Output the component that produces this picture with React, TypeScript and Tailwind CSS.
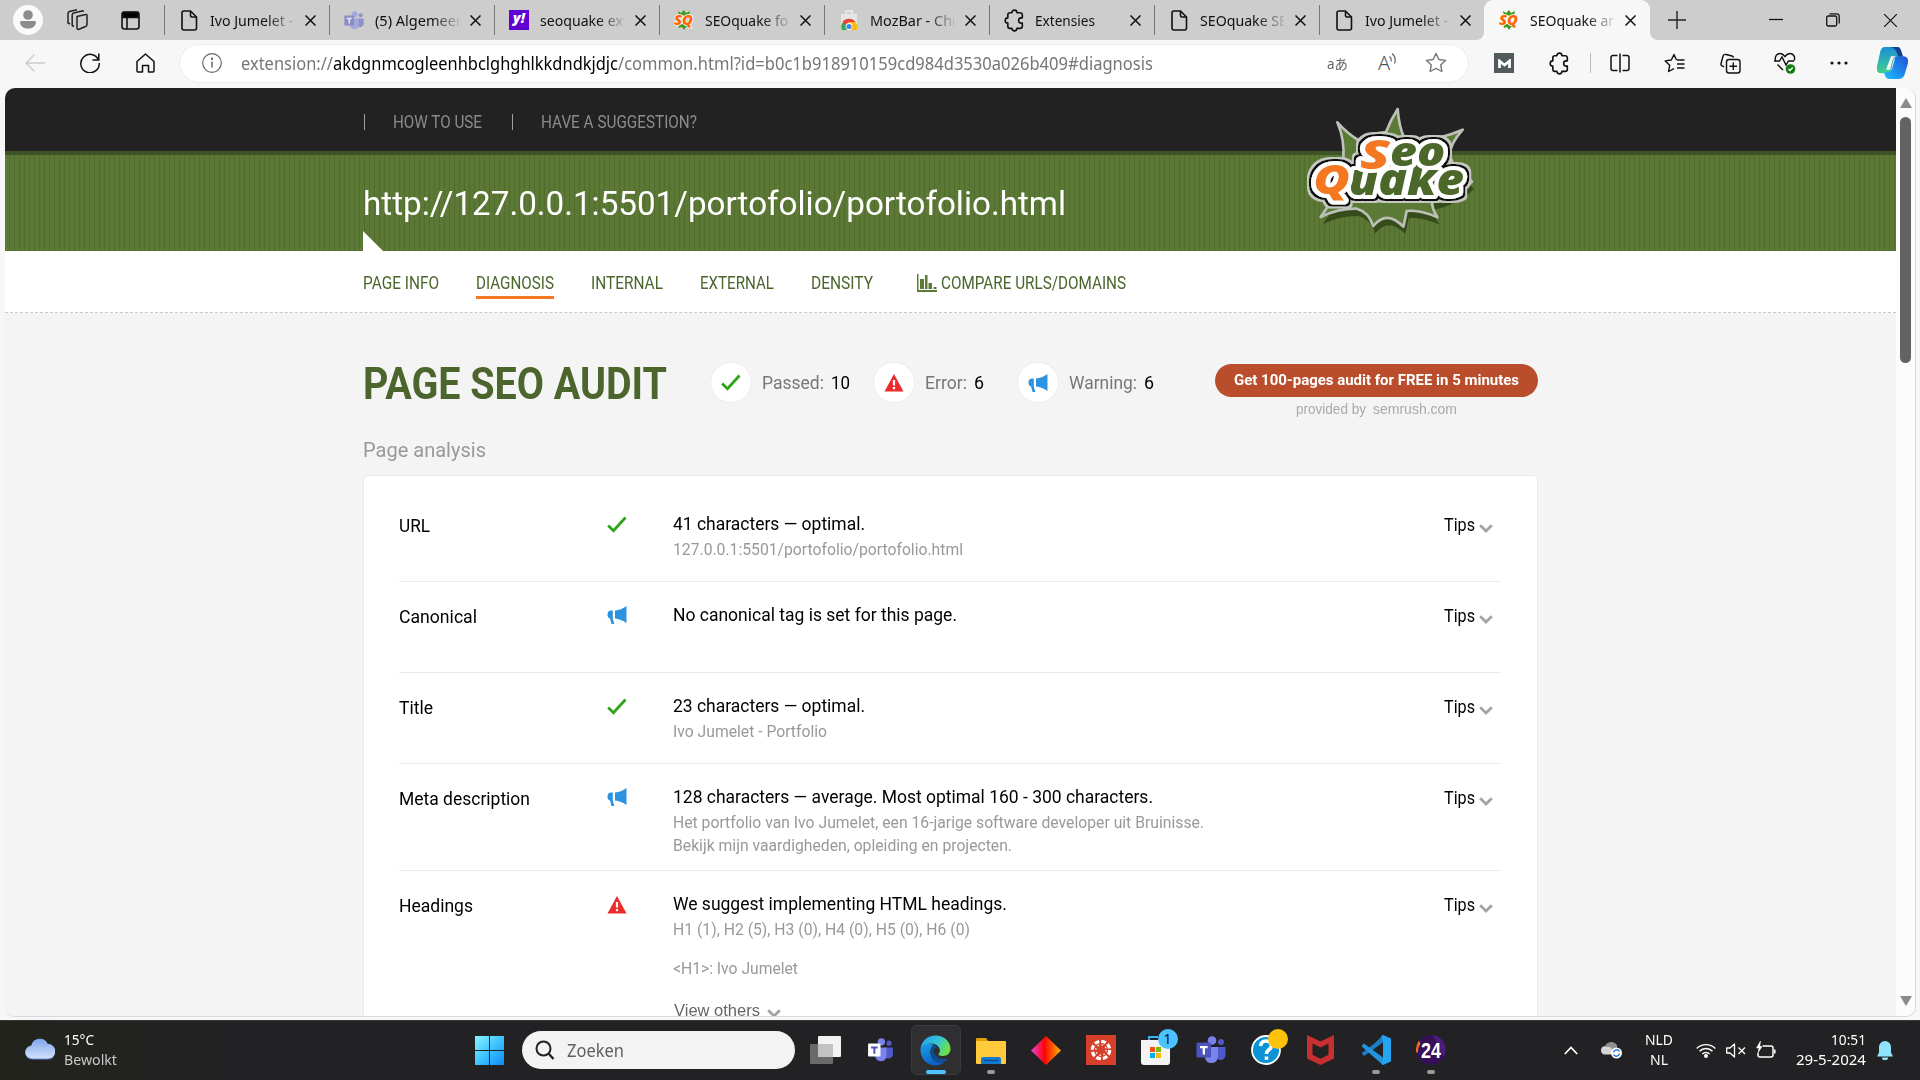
import React, { useLayoutEffect, useRef } from "react";

/* Text squeezed or stretched horizontally to the width its class gives it. */
function Fit({ className = "", children }: { className?: string; children: React.ReactNode }) {
  const outer = useRef<HTMLSpanElement>(null);
  const inner = useRef<HTMLSpanElement>(null);
  useLayoutEffect(() => {
    const o = outer.current;
    const i = inner.current;
    if (!o || !i) return;
    i.style.transform = "none";
    const natural = i.getBoundingClientRect().width;
    i.style.transform = `scaleX(${o.clientWidth / natural})`;
  });
  return (
    <span ref={outer} className={"block shrink-0 whitespace-nowrap " + className}>
      <span ref={inner} className="inline-block origin-left">{children}</span>
    </span>
  );
}

const segoe = "font-['Noto_Sans','Open_Sans',sans-serif]";

/* ---------- favicons ---------- */
const DocIcon = () => (
  <svg className="h-[21px] w-[17px]" viewBox="0 0 17 21" fill="none" stroke="#111" strokeWidth="1.6" strokeLinejoin="round">
    <path d="M3 1h6.5L15.500 7v11a2 2 0 0 1-2 2H3a2 2 0 0 1-2-2V3a2 2 0 0 1 2-2z" />
    <path d="M9.500 1v4.500a1.500 1.500 0 0 0 1.500 1.500h4.500" />
  </svg>
);
const SqIcon = () => (
  <svg className="h-5 w-5" viewBox="0 0 20 20">
    <path d="M4 1l3 2 3-3 2 3 4-2-1 5H5zM4 14l1 4 3-1 2 3 2-3 4 1v-4z" fill="#3f9b1c" />
    <text x="0" y="15" fontFamily="Open Sans" fontWeight="800" fontStyle="italic" fontSize="14" fill="#f60" stroke="#fff" strokeWidth="1.5" paintOrder="stroke" textLength="19" lengthAdjust="spacingAndGlyphs">SQ</text>
  </svg>
);
const TeamsIcon = ({ className = "", tile = "#4b53bc", letter = "#fff" }: { className?: string; tile?: string; letter?: string }) => (
  <svg className={className} viewBox="0 0 30 28">
    <circle cx="25" cy="6" r="3" fill="#5059c9" />
    <circle cx="16" cy="4.500" r="4.300" fill="#7b83eb" />
    <path d="M20 11h9.500v8a5 5 0 0 1-8 4z" fill="#5059c9" />
    <path d="M9 11h13v10a6.600 6.600 0 0 1-13 1z" fill="#7b83eb" />
    <rect x="0.500" y="6.500" width="14.500" height="15" rx="1" fill={tile} />
    <path d="M4 10h7.600v2.200H9V18.500H6.700V12.200H4z" fill={letter} />
  </svg>
);
const YahooIcon = () => (
  <span className="flex h-5 w-5 items-center justify-center bg-[#5f01d1] pb-1 font-['Open_Sans',sans-serif] text-[14px] leading-none font-extrabold text-white italic">y!</span>
);
const StoreFav = () => (
  <svg className="h-5 w-5" viewBox="0 0 20 20">
    <path d="M2 4h16v14a2 2 0 0 1-2 2H4a2 2 0 0 1-2-2z" fill="#e3e5e8" />
    <path d="M7 4V1h6v3" fill="none" stroke="#eee" strokeWidth="1.500" />
    <path d="M3 20a7.500 7.500 0 0 1 1-8l4 5v3z" fill="#34a853" />
    <path d="M3.500 12a8 8 0 0 1 13 0h-6.500l-3 4z" fill="#ea4335" />
    <path d="M10 12h6.500a8 8 0 0 1 1 8h-6z" fill="#fbbc05" />
    <circle cx="10" cy="16.500" r="3.400" fill="#fff" />
    <circle cx="10" cy="16.500" r="2.600" fill="#4285f4" />
  </svg>
);
const Puzzle = ({ className = "" }: { className?: string }) => (
  <svg className={className} viewBox="0 0 20 20" fill="none" stroke="#111" strokeWidth="1.4" strokeLinejoin="round">
    <path d="M6 3.200h1.700a2.200 2.200 0 0 1 4.400 0h2.900a1.800 1.800 0 0 1 1.800 1.800v2.700h-.9a2.300 2.300 0 0 0 0 4.600h.9v2.700a1.800 1.800 0 0 1-1.800 1.800h-2.900a2.200 2.200 0 0 1-4.400 0H6a1.800 1.800 0 0 1-1.800-1.800v-2.700a2.300 2.300 0 0 1 0-4.600V5A1.800 1.800 0 0 1 6 3.200z" />
  </svg>
);
const Cross = () => (
  <svg className="h-[11px] w-[11px]" viewBox="0 0 11 11" stroke="#111" strokeWidth="1.500"><path d="M.5.5l10 10M10.500.5l-10 10" /></svg>
);

const tabs: { icon: React.ReactNode; title: string; width: string }[] = [
  { icon: <DocIcon />, title: "Ivo Jumelet -", width: "w-[83px]" },
  { icon: <TeamsIcon className="h-[19px] w-5 opacity-50" />, title: "(5) Algemeen", width: "w-[90px]" },
  { icon: <YahooIcon />, title: "seoquake ext", width: "w-[88px]" },
  { icon: <SqIcon />, title: "SEOquake for", width: "w-[89px]" },
  { icon: <StoreFav />, title: "MozBar - Chr", width: "w-[88px]" },
  { icon: <Puzzle className="h-[23px] w-[23px] shrink-0" />, title: "Extensies", width: "w-[60px]" },
  { icon: <DocIcon />, title: "SEOquake SE", width: "w-[87px]" },
  { icon: <DocIcon />, title: "Ivo Jumelet -", width: "w-[83px]" },
];

function Tab({ icon, title, width }: { icon: React.ReactNode; title: string; width: string }) {
  return (
    <>
      <span className="ml-[14px] flex w-5 shrink-0 justify-center">{icon}</span>
      <span className={"ml-[11px] w-[84px] shrink-0 overflow-hidden text-[15px] leading-5 text-[#111] " + (title === "Extensies" ? "" : "[mask-image:linear-gradient(to_right,black_68%,transparent_104%)]")}>
        <Fit className={width}>{title}</Fit>
      </span>
      <span className="ml-[11px]"><Cross /></span>
    </>
  );
}

function TabStrip() {
  return (
    <div className="flex h-10 shrink-0 items-center bg-[#cdcdcd]">
      <span className="ml-[13px] flex h-[30px] w-[30px] items-center justify-center rounded-full bg-[#fafafa]">
        <svg className="h-[20px] w-[16px]" viewBox="0 0 16 20" fill="#8c8c8c"><circle cx="8" cy="5" r="4.800" /><path d="M1.500 11h13a1.400 1.400 0 0 1 1.400 1.500C15.500 16.500 12 18.500 8 18.500S.5 16.500.1 12.500A1.400 1.400 0 0 1 1.500 11z" /></svg>
      </span>
      <svg className="ml-[23px] h-[22px] w-[22px]" viewBox="0 0 22 22" fill="none" stroke="#222" strokeWidth="1.500" strokeLinejoin="round">
        <path d="M11 7.500l8.500-2A1.200 1.200 0 0 1 21 7v8.500a2 2 0 0 1-1.500 2L12.500 20.500A1.200 1.200 0 0 1 11 19.300z" />
        <path d="M8 17.500l-1.800-1V6a2 2 0 0 1 1.500-2L17 1.800V3M4 15l-2-1V4.500A2 2 0 0 1 3.500 2.600L11 .8" />
      </svg>
      <svg className="ml-[33px] h-[19px] w-[19px]" viewBox="0 0 19 19" fill="none" stroke="#111" strokeWidth="1.600">
        <rect x="1" y="1" width="17" height="17" rx="2.500" /><path d="M2 1.500h15v5H2z" fill="#000" /><path d="M6 6v12" />
      </svg>
      <div className="ml-[24px] flex">
        {tabs.map((t, i) => (
          <div key={i} className="flex h-10 w-[165px] items-center">
            <span className="h-[30px] w-px bg-[#777]" />
            <Tab {...t} />
          </div>
        ))}
      </div>
      <div className="relative flex h-10 w-[166px] items-center rounded-t-[9px] bg-[#f7f7f7]">
        <svg className="absolute bottom-0 -left-2 h-2 w-2" viewBox="0 0 8 8"><path d="M8 0v8H0a8 8 0 0 0 8-8z" fill="#f7f7f7" /></svg>
        <svg className="absolute -right-2 bottom-0 h-2 w-2" viewBox="0 0 8 8"><path d="M0 0v8h8a8 8 0 0 1-8-8z" fill="#f7f7f7" /></svg>
        <span className="w-px" />
        <Tab icon={<SqIcon />} title="SEOquake an" width="w-[87px]" />
      </div>
      <svg className="ml-[18px] h-[18px] w-[18px]" viewBox="0 0 18 18" stroke="#222" strokeWidth="1.400"><path d="M9 0v18M0 9h18" /></svg>
      <svg className="ml-[83px] h-[14px] w-[14px]" viewBox="0 0 14 14" stroke="#111" strokeWidth="1.300"><path d="M0 6.500h14" /></svg>
      <svg className="ml-[43px] h-[14px] w-[14px]" viewBox="0 0 14 14" fill="none" stroke="#111" strokeWidth="1.300"><rect x=".7" y="3" width="10" height="10" rx="1.500" /><path d="M3.500.8H11a2.200 2.200 0 0 1 2.200 2.200v7.500" /></svg>
      <svg className="ml-[44px] h-[13px] w-[13px]" viewBox="0 0 13 13" stroke="#111" strokeWidth="1.200"><path d="M0 0l13 13M13 0L0 13" /></svg>
    </div>
  );
}

const Star = ({ className = "", stroke = "#777" }: { className?: string; stroke?: string }) => (
  <svg className={className} viewBox="0 0 22 22" fill="none" stroke={stroke} strokeWidth="1.400" strokeLinejoin="round"><path d="M11 1.500l2.900 6 6.600.9-4.800 4.600 1.200 6.500-5.900-3.100-5.900 3.100 1.200-6.500L1.500 8.400l6.600-.9z" /></svg>
);

function Toolbar() {
  return (
    <div className="flex h-12 shrink-0 items-center bg-[#f7f7f7] pb-[2px]">
      <svg className="ml-[25px] h-[18px] w-5" viewBox="0 0 20 18" fill="none" stroke="#ccc" strokeWidth="1.400"><path d="M20 9H1M9.500.5L1 9l8.500 8.500" /></svg>
      <svg className="ml-[35px] h-[20px] w-[20px]" viewBox="0 0 20 20" fill="none" stroke="#111" strokeWidth="1.500"><path d="M18.500 7A9.200 9.200 0 1 0 19.200 10M18.800 .5V7H12.500" /></svg>
      <svg className="ml-[36px] h-[20px] w-[19px]" viewBox="0 0 19 20" fill="none" stroke="#111" strokeWidth="1.500" strokeLinejoin="round"><path d="M1 8.500L9.500 1 18 8.500V18a1 1 0 0 1-1 1h-4.500v-6.500h-6V19H2a1 1 0 0 1-1-1z" /></svg>
      <div className="ml-[25px] flex h-[37px] w-[1288px] shrink-0 items-center rounded-full bg-white shadow-[0_0_2px_#0002]">
        <svg className="ml-[22px] h-5 w-5" viewBox="0 0 20 20" fill="none" stroke="#666" strokeWidth="1.200"><circle cx="10" cy="10" r="9.300" /><path d="M10 8.500v6" strokeWidth="1.500" /><circle cx="10" cy="5.800" r=".6" fill="#666" /></svg>
        <div className="ml-[19px] flex text-[17.5px] leading-6 text-[#767676]">
          <Fit className="w-[92px]">extension://</Fit>
          <Fit className="w-[285px] text-black">akdgnmcogleenhbclghghlkkdndkjdjc</Fit>
          <Fit className="w-[535px]">/common.html?id=b0c1b918910159cd984d3530a026b409#diagnosis</Fit>
        </div>
        <Fit className="ml-[174px] w-[21px] font-['Noto_Sans','Noto_Sans_CJK_JP',sans-serif] text-[14px] text-[#666]">aあ</Fit>
        <div className="ml-[30px] flex">
          <span className="text-[20px] leading-5 font-light text-[#555]">A</span>
          <svg className="-ml-[1px] h-3 w-2" viewBox="0 0 8 12" fill="none" stroke="#666" strokeWidth="1.200"><path d="M.5 3.500a5 5 0 0 1 1.500 5M3 .5a9 9 0 0 1 2.500 10" /></svg>
        </div>
        <Star className="ml-[28px] h-[22px] w-[22px]" />
      </div>
      <span className="ml-[26px] flex h-5 w-5 shrink-0 items-center justify-center bg-[#515a5c]">
        <svg className="h-[9px] w-[13px]" viewBox="0 0 13 9" fill="none" stroke="#fff" strokeWidth="2.800"><path d="M1.500 9V2l5 4 5-4v7" /></svg>
      </span>
      <Puzzle className="ml-[34px] h-[23px] w-[23px]" />
      <span className="ml-[19px] h-5 w-px bg-[#bbb]" />
      <svg className="ml-[19px] h-5 w-5" viewBox="0 0 20 20" fill="none" stroke="#111" strokeWidth="1.500"><path d="M10 .5v19M7.500 2.500H3a2 2 0 0 0-2 2v11a2 2 0 0 0 2 2h4.500M12.500 2.500H17a2 2 0 0 1 2 2v11a2 2 0 0 1-2 2h-4.500" /></svg>
      <svg className="ml-[34px] h-5 w-[21px]" viewBox="0 0 21 20" fill="none" stroke="#111" strokeWidth="1.400" strokeLinejoin="round"><path d="M12.500 7L10 1.500 7.300 7 1.200 7.900l4.500 4.300L4.600 18.500 10 15.600M13 7h7.500M13 11h7.500M13 15h7.500" /></svg>
      <svg className="ml-[35px] h-[21px] w-[21px]" viewBox="0 0 21 21" fill="none" stroke="#111" strokeWidth="1.400"><rect x="6.500" y="6.500" width="13.500" height="13.500" rx="2.500" /><path d="M13.300 9.500v7.500M9.500 13.300h7.500M4 14l-1.500-.8a2.500 2.500 0 0 1-1.400-3L3 3.300A2.500 2.500 0 0 1 6 1.500l6 1.500a2.500 2.500 0 0 1 1.600 1.500" /></svg>
      <svg className="ml-[33px] h-[22px] w-[22px]" viewBox="0 0 22 22" fill="none" stroke="#111" strokeWidth="1.400"><path d="M1.500 9C.5 4 3 1.500 6 1.500c2 0 3.500 1 5 3 1.500-2 3-3 5-3 3 0 5.500 3 4.300 7M0 9h5.500l2.500-4 4 8 2.500-4H20M3.500 12.500L9 18" /><circle cx="16.500" cy="17" r="4.800" fill="#107c10" stroke="none" /><path d="M14.500 17l1.500 1.500 2.700-3" stroke="#fff" /></svg>
      <svg className="ml-[34px] h-4 w-[18px]" viewBox="0 0 18 16" fill="#111"><circle cx="2" cy="8" r="1.600" /><circle cx="9" cy="8" r="1.600" /><circle cx="16" cy="8" r="1.600" /></svg>
      <svg className="ml-[29px] h-[32px] w-[31px]" viewBox="0 0 31 28" preserveAspectRatio="none">
        <defs>
          <linearGradient id="cpA" x1="0" y1="0" x2="0" y2="1"><stop offset="0" stopColor="#1b8fd8" /><stop offset="1" stopColor="#3fd08a" /></linearGradient>
          <linearGradient id="cpB" x1="1" y1="0" x2="0" y2="1"><stop offset="0" stopColor="#2350d8" /><stop offset="1" stopColor="#18c0ff" /></linearGradient>
        </defs>
        <path d="M8 0h12q3 0 4 3l2 6h-5q-4 0-5 4l-2 8q-1 2-3 2H4q-5 0-4-6L3 5Q4 0 8 0z" fill="url(#cpA)" />
        <path d="M26 8q6 0 5 6l-3 9q-1.500 5-6 5H12q-3 0-4-3l-1-3h4q3 0 4-3l3-9q1-2 3-2z" fill="url(#cpB)" />
        <path d="M14 8h5q-3 1-4 5l-2 7H9z" fill="#f7f7f7" />
        <path d="M14 0h6q3 0 4 3l2 5h-5q-2-7-7-8z" fill="#143f8f" />
      </svg>
    </div>
  );
}

/* ---------- page ---------- */
const burst = "M232 97Q262 130 294 150Q330 130 378 126Q392 90 413 57Q417 110 432 142Q452 155 480 152Q545 146 608 119Q572 160 570 190Q572 225 600 238L636 275L608 300Q560 330 515 337Q518 360 532 382Q480 358 440 363Q436 385 430 410Q380 358 340 408Q325 365 290 356Q235 355 182 381L206 346Q170 280 250 212Q255 150 232 97Z";

const Logo = () => (
  <svg className="absolute top-[2px] left-[1255px] h-[180px] w-[300px]" viewBox="0 0 900 540">
    <defs>
      <clipPath id="low"><rect x="0" y="260" width="900" height="300" /></clipPath>
      {/* black rim, then a thin light rim, round the lettering */}
      <filter id="rim" x="-10%" y="-10%" width="120%" height="120%">
        <feMorphology in="SourceAlpha" operator="dilate" radius="7" result="m1" />
        <feGaussianBlur in="m1" stdDeviation="1.5" result="b1" />
        <feMorphology in="SourceAlpha" operator="dilate" radius="11" result="m2" />
        <feGaussianBlur in="m2" stdDeviation="2" result="b2" />
        <feFlood floodColor="#111" /><feComposite in2="b1" operator="in" result="c1" />
        <feFlood floodColor="#c5c8c0" /><feComposite in2="b2" operator="in" result="c2" />
        <feMerge><feMergeNode in="c2" /><feMergeNode in="c1" /><feMergeNode in="SourceGraphic" /></feMerge>
      </filter>
    </defs>
    <path d={burst} transform="translate(6 22)" fill="#2d4215" opacity=".8" clipPath="url(#low)" />
    <path d={burst} fill="#5b7a36" stroke="#bdc0b8" strokeWidth="8" strokeLinejoin="round" />
    <g filter="url(#rim)" fontFamily="Open Sans" fontWeight="800" fontStyle="italic" stroke="#fff" strokeWidth="24" strokeLinejoin="round" paintOrder="stroke">
      <text x="266" y="315" fontSize="134" textLength="346" lengthAdjust="spacingAndGlyphs" fill="#4b682c">uake</text>
      <text x="390" y="227" fontSize="120" textLength="166" lengthAdjust="spacingAndGlyphs" fill="#4b682c">eo</text>
      <text x="160" y="312" fontSize="124" textLength="110" lengthAdjust="spacingAndGlyphs" fill="#f47721">Q</text>
      <text x="300" y="236" fontSize="124" textLength="90" lengthAdjust="spacingAndGlyphs" fill="#f47721">S</text>
    </g>
  </svg>
);

const Check = () => (
  <svg className="h-[17px] w-5" viewBox="0 0 20 17" fill="none" stroke="#2fa41a" strokeWidth="2.800"><path d="M1.200 9.500l5.300 5.200L18.500 1.500" /></svg>
);
const Horn = () => (
  <svg className="h-5 w-5" viewBox="0 0 20 20" fill="#2b93e1"><path d="M8 5.500Q14 5 19.500 1v17Q14 14 8 13.500z" /><path d="M5.800 5.500v8l1.500 5.500H4.500L3 13.500Q.5 13 .5 9.500t3-4z" /></svg>
);
const Alert = () => (
  <svg className="h-[19px] w-5" viewBox="0 0 20 19"><path d="M10 1l9.500 17.500H.5z" fill="#ee2b2b" /><path d="M10 7v5.500M10 14v2.200" stroke="#fff" strokeWidth="2.200" /></svg>
);
const Chevron = () => (
  <svg className="h-[9px] w-[14px]" viewBox="0 0 14 9" fill="none" stroke="#a3a3a3" strokeWidth="2.800"><path d="M1.200 1.200L7 7l5.800-5.800" /></svg>
);
const icons = { ok: <Check />, warn: <Horn />, err: <Alert /> };

function Row(p: { label: string; lw: string; icon: keyof typeof icons; head: string; hw: string; h: string; last?: boolean; children?: React.ReactNode }) {
  return (
    <div className={"flex items-start border-[#ebebeb] " + p.h + (p.last ? "" : " border-b")}>
      <div className="w-[208px] shrink-0 pt-[2px] text-[17.5px] leading-5 text-black"><Fit className={p.lw}>{p.label}</Fit></div>
      <div className="flex h-5 w-[66px] shrink-0 items-center">{icons[p.icon]}</div>
      <div className="grow text-[15.6px] leading-[23px] text-[#999]">
        <div className="text-[17.5px] leading-5 text-black"><Fit className={p.hw}>{p.head}</Fit></div>
        <div className="pt-[5px]">{p.children}</div>
      </div>
      <div className="mr-[8px] flex shrink-0 gap-1 pt-[1px] text-[17.5px] leading-5 text-black">
        <Fit className="w-[31px]">Tips</Fit>
        <span className="pt-[9px]"><Chevron /></span>
      </div>
    </div>
  );
}

function Stat(p: { icon: React.ReactNode; label: string; lw: string; value: string; vw: string; className?: string }) {
  return (
    <div className={"flex items-center " + p.className}>
      <span className="flex h-[41px] w-[42px] items-center justify-center rounded-full border border-[#ececec] bg-white">{p.icon}</span>
      <Fit className={"ml-[10px] text-[#777] " + p.lw}>{p.label}</Fit>
      <Fit className={"ml-[7px] text-black " + p.vw}>{p.value}</Fit>
    </div>
  );
}

function Page() {
  return (
    <div className="flex h-[929px] w-[1891px] shrink-0 flex-col overflow-hidden bg-[#f4f4f4] font-['Roboto',sans-serif]">
      <div className="relative shrink-0">
        <div className="flex h-[63px] items-center bg-[#222] pt-[5px] pl-[359px] text-[17.5px] leading-5 text-[#8b8b8b]">
          <span className="h-4 w-px bg-[#a0a0a0]" />
          <Fit className="ml-[28px] w-[89px]">HOW TO USE</Fit>
          <span className="ml-[30px] h-4 w-px bg-[#a0a0a0]" />
          <Fit className="ml-[28px] w-[156px]">HAVE A SUGGESTION?</Fit>
        </div>
        <div className="relative h-[100px] border-t-4 border-[#3f5426] bg-[repeating-linear-gradient(to_right,#5b7935_0_4px,#516c2f_4px_5px)] pt-[30px] pl-[358px] text-[32.5px] leading-[38px] text-white">
          <Fit className="w-[703px]">http://127.0.0.1:5501/portofolio/portofolio.html</Fit>
          <svg className="absolute bottom-0 left-[358px] h-5 w-5" viewBox="0 0 20 20"><path d="M0 0l20 20H0z" fill="#fff" /></svg>
        </div>
        <Logo />
      </div>
      <div className="flex h-[62px] shrink-0 items-start border-b border-dashed border-[#c8c8c8] bg-white pt-[22px] pl-[358px] text-[17.5px] leading-5 text-[#4b652d]">
        <Fit className="w-[76px]">PAGE INFO</Fit>
        <Fit className="ml-[37px] h-[26px] w-[78px] border-b-[3px] border-[#f47721]">DIAGNOSIS</Fit>
        <Fit className="ml-[37px] w-[72px]">INTERNAL</Fit>
        <Fit className="ml-[37px] w-[74px]">EXTERNAL</Fit>
        <Fit className="ml-[37px] w-[62px]">DENSITY</Fit>
        <svg className="mt-[1px] ml-[44px] h-[18px] w-5" viewBox="0 0 20 18" fill="#5b7a36"><path d="M0 0h1.500v16H20v2H0zM3 5h4v10H3zM8 1h2.500v14H8zM11.500 9h3.500v6h-3.500zM16.500 13h3v2h-3z" /></svg>
        <Fit className="ml-[4px] w-[185px]">COMPARE URLS/DOMAINS</Fit>
      </div>
      <div className="mt-[46px] flex h-[48px] shrink-0 items-start pl-[358px]">
        <Fit className="mt-[-1px] w-[304px] text-[45px] leading-[52px] font-bold text-[#4b652d]">PAGE SEO AUDIT</Fit>
        <div className="mt-[3px] flex text-[17.5px] leading-5">
          <Stat className="ml-[43px]" icon={<Check />} label="Passed:" lw="w-[62px]" value="10" vw="w-[19px]" />
          <Stat className="ml-[23px]" icon={<Alert />} label="Error:" lw="w-[42px]" value="6" vw="w-[10px]" />
          <Stat className="ml-[33px]" icon={<Horn />} label="Warning:" lw="w-[68px]" value="6" vw="w-[10px]" />
        </div>
        <div className="mt-[5px] ml-[61px] flex w-[323px] flex-col items-center">
          <div className="flex h-[33px] w-full justify-center rounded-full bg-[#ba4e2c] pt-[6px] text-[15px] leading-5 font-bold text-white"><Fit className="w-[285px]">Get 100-pages audit for FREE in 5 minutes</Fit></div>
          <div className="mt-[4px] flex gap-[7px] font-['Liberation_Sans',sans-serif] text-[13.75px] leading-[18px] text-[#aaa]">
            <Fit className="w-[70px]">provided by</Fit>
            <Fit className="w-[84px]">semrush.com</Fit>
          </div>
        </div>
      </div>
      <div className="mt-[31px] shrink-0 pl-[358px] text-[20px] leading-6 text-[#999]"><Fit className="w-[123px]">Page analysis</Fit></div>
      <div className="mt-[13px] ml-[358px] w-[1175px] shrink-0 rounded-t-[4px] border border-[#ebebeb] bg-white pt-[38px] pr-[36px] pl-[35px]">
        <Row label="URL" lw="w-[31px]" icon="ok" head="41 characters — optimal." hw="w-[192px]" h="h-[68px]">
          <Fit className="w-[290px]">127.0.0.1:5501/portofolio/portofolio.html</Fit>
        </Row>
        <div className="h-[23px]" />
        <Row label="Canonical" lw="w-[78px]" icon="warn" head="No canonical tag is set for this page." hw="w-[284px]" h="h-[68px]" />
        <div className="h-[23px]" />
        <Row label="Title" lw="w-[34px]" icon="ok" head="23 characters — optimal." hw="w-[192px]" h="h-[68px]">
          <Fit className="w-[154px]">Ivo Jumelet - Portfolio</Fit>
        </Row>
        <div className="h-[23px]" />
        <Row label="Meta description" lw="w-[131px]" icon="warn" head="128 characters — average. Most optimal 160 - 300 characters." hw="w-[480px]" h="h-[84px]">
          <Fit className="w-[531px]">Het portfolio van Ivo Jumelet, een 16-jarige software developer uit Bruinisse.</Fit>
          <Fit className="w-[339px]">Bekijk mijn vaardigheden, opleiding en projecten.</Fit>
        </Row>
        <div className="h-[23px]" />
        <Row label="Headings" lw="w-[74px]" icon="err" head="We suggest implementing HTML headings." hw="w-[334px]" h="h-[140px]" last>
          <Fit className="w-[297px]">H1 (1), H2 (5), H3 (0), H4 (0), H5 (0), H6 (0)</Fit>
          <Fit className="mt-[16px] w-[125px]">{"<H1>: Ivo Jumelet"}</Fit>
          <div className="mt-[17px] flex gap-[7px] pl-px font-['Liberation_Sans',sans-serif] text-[16.5px] leading-6 text-[#666]">
            <Fit className="w-[86px]">View others</Fit>
            <span className="pt-[11px]"><Chevron /></span>
          </div>
        </Row>
      </div>
    </div>
  );
}

function Scrollbar() {
  return (
    <div className="flex w-[19px] shrink-0 flex-col items-center justify-between bg-[#fcfcfc] py-[10px]">
      <div className="flex flex-col items-center">
        <svg className="h-[10px] w-3" viewBox="0 0 12 10"><path d="M6 0l6 10H0z" fill="#8b8b8b" /></svg>
        <span className="mt-[9px] h-[246px] w-[11px] rounded-full bg-[#636363]" />
      </div>
      <svg className="h-[10px] w-3" viewBox="0 0 12 10"><path d="M6 10L0 0h12z" fill="#8b8b8b" /></svg>
    </div>
  );
}

/* ---------- taskbar ---------- */
function TaskApp({ children, active, running }: { children: React.ReactNode; active?: boolean; running?: boolean }) {
  return (
    <div className="flex h-[60px] w-[55px] shrink-0 items-center justify-center">
      <div className={"relative flex h-[50px] w-[50px] items-center justify-center rounded-md " + (active ? "border border-[#3b3b3e] bg-[#2f2f32]" : "")}>
        {children}
        {active && <span className="absolute bottom-0 h-1 w-5 rounded-full bg-[#4cc2ff]" />}
        {running && <span className="absolute bottom-[1px] h-1 w-2 rounded-full bg-[#9a9a9a]" />}
      </div>
    </div>
  );
}

function Taskbar() {
  return (
    <div className={"flex h-[60px] shrink-0 items-center border-t border-[#38383a] bg-[linear-gradient(to_right,#22221c_0,#222224_220px,#222224_100%)] pb-px text-white " + segoe}>
      <svg className="-mt-1 ml-[25px] h-[24px] w-[30px]" viewBox="0 0 30 25">
        <defs><linearGradient id="cl" x1="0" y1="0" x2="0" y2="1"><stop offset="0" stopColor="#7fa5ea" /><stop offset="1" stopColor="#d5e2fb" /></linearGradient></defs>
        <path d="M7 24a7 7 0 0 1-1-14 9 9 0 0 1 17-2 8 8 0 0 1 0 16z" fill="url(#cl)" /><path d="M2 22q3 2 6 2h15q4 0 6-2" fill="none" stroke="#5f8ad8" />
      </svg>
      <div className="-mt-[3px] ml-[9px] w-[53px] text-[15px] leading-5">
        <Fit className="w-[30px]">15°C</Fit>
        <Fit className="w-[53px] text-[#c8c8c8]">Bewolkt</Fit>
      </div>
      <svg className="ml-[358px] h-[29px] w-[29px]" viewBox="0 0 29 29">
        <defs><linearGradient id="win" x1="0" y1="0" x2="29" y2="29" gradientUnits="userSpaceOnUse"><stop offset="0" stopColor="#8af4ff" /><stop offset=".5" stopColor="#40c4ff" /><stop offset="1" stopColor="#0a8cf5" /></linearGradient></defs>
        <path d="M0 0h14v14H0zM15 0h14v14H15zM0 15h14v14H0zM15 15h14v14H15z" fill="url(#win)" />
      </svg>
      <div className="ml-[18px] flex h-[38px] w-[273px] shrink-0 items-center rounded-full bg-[#f3f3f3] text-[#5f5f5f]">
        <svg className="ml-[13px] h-5 w-5" viewBox="0 0 20 20" fill="none" stroke="#222" strokeWidth="2"><circle cx="8.500" cy="8.500" r="7" /><path d="M13.500 13.500l5 5.500" strokeWidth="2.400" /></svg>
        <Fit className="ml-[12px] w-[57px] text-[17.5px] leading-6">Zoeken</Fit>
      </div>
      <div className="ml-[3px] flex">
        <TaskApp><svg className="-mt-px h-[28px] w-[31px]" viewBox="0 0 31 28"><rect y="8" width="23" height="20" rx="1" fill="#6a6a6a" /><rect x="8" width="23" height="21" rx="1" fill="#f2f2f2" /><path d="M8 8h15v13H8z" fill="#c2c2c2" /></svg></TaskApp>
        <TaskApp><TeamsIcon className="h-[24px] w-[27px]" tile="#fff" letter="#4b53bc" /></TaskApp>
        <TaskApp active>
          <svg className="h-[31px] w-[31px]" viewBox="0 0 31 31">
            <defs>
              <linearGradient id="e1" x1="0" y1="0" x2="1" y2=".4"><stop offset="0" stopColor="#1e9fe8" /><stop offset=".6" stopColor="#35c5d8" /><stop offset="1" stopColor="#6be04c" /></linearGradient>
              <linearGradient id="e2" x1="0" y1="0" x2=".5" y2="1"><stop offset="0" stopColor="#1ea0e6" /><stop offset="1" stopColor="#0a5fc4" /></linearGradient>
            </defs>
            <path d="M.5 14C1.500 5.500 8 .5 15.500.5 24 .5 30.500 6.500 30.500 14c0 4-3 7-7.500 7-4 0-5-1.500-4.500-2.500 1.500-2 1.500-4 .5-6C16 7 5 7 .5 14z" fill="url(#e1)" />
            <path d="M.5 14C3 9 9 8 13.500 9.500 11 12 9.500 16 11 20.500c1.500 5 7 8 13 6.500-3 3-6.500 3.700-9 3.500C6 30 0 23 .5 14z" fill="url(#e2)" />
            <path d="M13.500 10c-2.500 3-3.500 7-2 11 2 5 8 7.500 13 5.500 2-.8 3.500-2.500 4-3.500-5 2-10 1-12.500-2-2.500-3-2-6 1-8.500-1-1.500-2-2.300-3.500-2.500z" fill="#0c4f99" />
            <circle cx="16.500" cy="16" r="3.200" fill="#2f2f32" />
          </svg>
        </TaskApp>
        <TaskApp running><svg className="h-[27px] w-[30px]" viewBox="0 0 30 27"><path d="M0 2q0-1 1-1h9l3 4H0z" fill="#e0a000" /><path d="M0 4h29q1 0 1 1v21q0 1-1 1H1q-1 0-1-1z" fill="#ffcb3d" /><path d="M5 27v-5q0-2 2-2h16q2 0 2 2v5z" fill="#1279cf" /><path d="M8 23.500h14" stroke="#0b4f94" strokeWidth="1.500" /></svg></TaskApp>
        <TaskApp><svg className="h-[29px] w-[30px]" viewBox="0 0 30 29"><defs><linearGradient id="dm"><stop offset="0" stopColor="#f040e0" /><stop offset=".45" stopColor="#fb0505" /><stop offset="1" stopColor="#ffb400" /></linearGradient></defs><path d="M15 0l15 14.500L15 29 0 14.500z" fill="url(#dm)" /></svg></TaskApp>
        <TaskApp><svg className="h-[30px] w-[30px]" viewBox="0 0 30 30"><path d="M0 0h30v30H0z" fill="#d6402b" /><circle cx="15" cy="15" r="8.700" fill="none" stroke="#fff" strokeWidth="3.200" strokeDasharray="4.800 2.030" /><circle cx="15" cy="15" r="5.200" fill="none" stroke="#fff" strokeWidth="1.400" strokeDasharray="1.400 2.680" /></svg></TaskApp>
        <TaskApp>
          <svg className="h-[30px] w-[30px]" viewBox="0 0 30 30"><path d="M8 5V2h9" fill="none" stroke="#3cb6f0" strokeWidth="1.800" /><path d="M0 5h29v22q0 3-3 3H3q-3 0-3-3z" fill="#f4f4f4" /><path d="M9 12h5v5H9z" fill="#f1511b" /><path d="M15 12h5v5h-5z" fill="#80bb01" /><path d="M9 18h5v5H9z" fill="#02adef" /><path d="M15 18h5v5h-5z" fill="#fbbb09" /></svg>
          <span className="absolute top-[4px] right-[3px] flex h-5 w-5 items-center justify-center rounded-full bg-[#4cc2ff] text-[14px] leading-none text-[#111]">1</span>
        </TaskApp>
        <TaskApp><TeamsIcon className="h-[28px] w-[30px]" /></TaskApp>
        <TaskApp>
          <svg className="h-[30px] w-[30px]" viewBox="0 0 30 30"><circle cx="15" cy="15" r="14" fill="#0a94d6" stroke="#fff" strokeWidth="1.800" /><path d="M9.500 11q.5-5 5.500-5t5.500 4.500q0 2.500-3 4.500-2 1.500-2 4M15.500 21.500v3.200" fill="none" stroke="#fff" strokeWidth="3.600" /></svg>
          <span className="absolute top-[4px] right-[3px] h-5 w-5 rounded-full bg-[#ffc20a]" />
        </TaskApp>
        <TaskApp><svg className="h-[30px] w-[27px]" viewBox="0 0 27 30"><path d="M0 0l13.500 6.500L27 0v23.500L13.500 30 0 23.500zM5.500 8.500v11.200l8 4 8-4V8.500l-8 4z" fill="#c8302f" fillRule="evenodd" /></svg></TaskApp>
        <TaskApp running><svg className="h-[30px] w-[30px]" viewBox="0 0 30 30"><path d="M22 0l-8 8L3 16.500.5 18l2.500 3L22 7.500z" fill="#1b7fc8" /><path d="M22 30L3 13.500.5 11 3 8.500 22 22.500z" fill="#2196e0" /><path d="M22 0l8 3.500v23L22 30l-1.500-1L22 23V7l-1.500-6z" fill="#25a5f0" /></svg></TaskApp>
        <TaskApp running><svg className="h-[30px] w-[30px]" viewBox="0 0 30 30"><circle cx="15" cy="15" r="15" fill="#361056" /><path d="M17 0a15 15 0 0 1 11 22z" fill="#4c1b7b" /><path d="M0 17q-.5-7 3-11.500l1.500 3Q2 12 1.800 18z" fill="#f26a1b" /><text x="5" y="23" fontFamily="Liberation Sans" fontWeight="700" fontSize="22" fill="#fff" textLength="20" lengthAdjust="spacingAndGlyphs">24</text></svg></TaskApp>
      </div>
      <div className="ml-[106px] flex shrink-0 items-center">
        <svg className="h-[9px] w-[14px]" viewBox="0 0 14 9" fill="none" stroke="#fff" strokeWidth="1.700"><path d="M.8 8L7 1.500 13.200 8" /></svg>
        <svg className="ml-[23px] h-[18px] w-[21px]" viewBox="0 0 21 18"><path d="M4 13a4 4 0 0 1 0-8 7 7 0 0 1 12-1v9z" fill="#909090" /><path d="M4 13.500a4 4 0 1 1 2-7.500q3-1 6 3l-2 4.500z" fill="#d5d5d5" /><circle cx="15.500" cy="12" r="5.500" fill="#fff" /><path d="M12.500 11.500a3.200 3.200 0 0 1 6-1M18.500 12.500a3.200 3.200 0 0 1-6 1" stroke="#1a73d0" strokeWidth="1.400" fill="none" /></svg>
        <div className="-mt-[2px] ml-[23px] flex w-[28px] flex-col items-center text-[15px] leading-5"><Fit className="w-[28px]">NLD</Fit><Fit className="w-[18px]">NL</Fit></div>
        <svg className="ml-[23px] h-4 w-5" viewBox="0 0 20 16" fill="none" stroke="#fff" strokeWidth="1.400"><path d="M.7 6.500a13 13 0 0 1 18.600 0M3.500 9.300a9 9 0 0 1 13 0M6.300 12a5.300 5.300 0 0 1 7.400 0" /><circle cx="10" cy="14" r="1.300" fill="#fff" /></svg>
        <svg className="ml-[10px] h-[15px] w-5" viewBox="0 0 20 15" fill="none" stroke="#fff" strokeWidth="1.300" strokeLinejoin="round"><path d="M.7 5v5H4l4.500 4V1L4 5zM12.500 4.500l6.500 6.500M19 4.500L12.500 11" /></svg>
        <svg className="ml-[10px] h-[18px] w-5" viewBox="0 0 20 18" fill="none" stroke="#fff" strokeWidth="1.500"><path d="M6.500 5H15a2 2 0 0 1 2 2v7a2 2 0 0 1-2 2H4a2 2 0 0 1-2-2v-2M18.800 8.500v4" /><path d="M4.500 0L.5 7H3L2 12l4-6.500H3.800z" fill="#fff" strokeWidth=".5" /></svg>
        <div className="-mt-[3px] ml-[20px] flex w-[70px] flex-col items-end text-[15px] leading-5"><Fit className="w-[35px]">10:51</Fit><Fit className="w-[70px]">29-5-2024</Fit></div>
        <svg className="ml-[11px] h-[19px] w-4" viewBox="0 0 16 19" fill="#8fe3fb"><path d="M8 0a6 6 0 0 1 6 6v5.500l2 4H0l2-4V6a6 6 0 0 1 6-6zM5 16.500h6a3 3 0 0 1-6 0z" /></svg>
      </div>
    </div>
  );
}

export default function App() {
  return (
    <div className={"flex h-[1080px] w-[1920px] flex-col overflow-hidden bg-[#f7f7f7] " + segoe}>
      <TabStrip />
      <Toolbar />
      <div className="flex h-[932px] shrink-0 pl-[5px]">
        <div className="flex h-[929px] w-[1911px] overflow-hidden rounded-[10px] border-r border-b border-[#d8d8d8]">
          <Page />
          <Scrollbar />
        </div>
      </div>
      <Taskbar />
    </div>
  );
}
